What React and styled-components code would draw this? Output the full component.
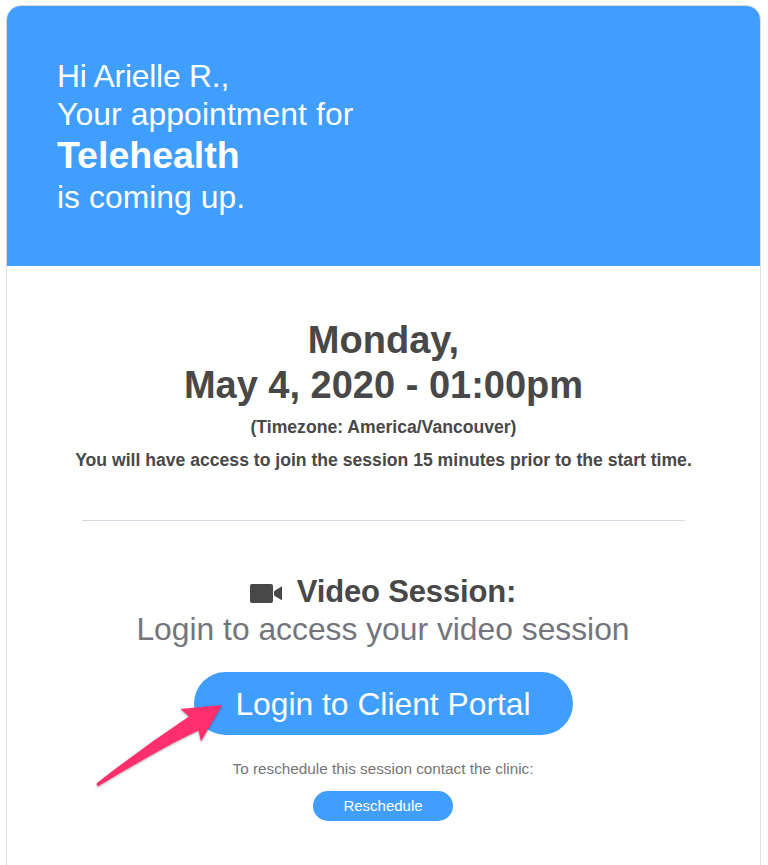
import React from 'react';
import styled, { createGlobalStyle } from 'styled-components';

const Global = createGlobalStyle`
  * { box-sizing: border-box; }
  html, body { margin: 0; background: #fff; }
  body { font-family: "Liberation Sans", Helvetica, Arial, sans-serif; overflow: hidden; }
`;
const Card = styled.main`
  width: 755px; height: 860px; margin: 5px 0 0 6px;
  border: 1px solid #dfdfdf; border-bottom: 0; border-radius: 15px 15px 0 0;
  overflow: hidden; text-align: center; color: #484848;
`;
const Hero = styled.header`
  height: 259.5px; padding: 51.5px 50px 0; background: #409eff; color: #fff; text-align: left;
`;
const Line = styled.div`
  display: flex;
  justify-content: ${p => (p.$left ? 'flex-start' : 'center')};
  align-items: center;
  height: ${p => p.$h}px;
  font-size: ${p => p.$size}px;
  font-weight: ${p => (p.$bold ? 700 : 400)};
  letter-spacing: ${p => p.$track || 0}px;
  color: ${p => p.$color || 'inherit'};
  white-space: pre;
`;
const DateBlock = styled.section`
  padding-top: 51.5px; height: 254.5px;
`;
const Divider = styled.hr`
  width: 603px; height: 1px; margin: 0 auto; border: 0; background: #d6dae4;
`;
const Session = styled.section`
  padding: 51px 1px 0 0;
`;
const CameraIcon = styled.svg`
  width: 32px; height: 20px; margin: 4px 15px 0 0; fill: #484848;
`;
const Button = styled.button`
  display: flex; align-items: center; justify-content: center; position: relative;
  width: ${p => p.$w}px; height: ${p => p.$h}px; margin: ${p => p.$top}px auto 0;
  padding: ${p => p.$pad || 0}px 0 ${p => p.$padBottom || 0}px;
  border: 0; border-radius: 40px; background: #409eff; color: #fff;
  font: ${p => p.$size}px "Liberation Sans", Helvetica, Arial, sans-serif;
`;
const Arrow = styled.svg`
  position: absolute; left: -101.5px; top: 25px; width: 140px; height: 95px;
  filter: drop-shadow(0 1px 1px rgba(0,0,0,.35)); pointer-events: none;
`;

export default function App() {
  return <><Global /><Card>
    <Hero>
      <Line $left $h={38} $size={31.8} $track={-0.2}>Hi Arielle R.,</Line>
      <Line $left $h={38} $size={31.8} $track={0.12}>Your appointment for</Line>
      <Line $left $h={44} $size={37.5} $bold>Telehealth</Line>
      <Line $left $h={39} $size={31.8} $track={0.06}>is coming up.</Line>
    </Hero>
    <DateBlock>
      <Line $h={46} $size={38} $bold>Monday,</Line>
      <Line $h={45} $size={38} $bold>May 4, 2020 - 01:00pm</Line>
      <Line $h={38} $size={17.6} $bold>(Timezone: America/Vancouver)</Line>
      <Line $h={29} $size={17.6} $bold>You will have access to join the session 15 minutes prior to the start time.</Line>
    </DateBlock>
    <Divider />
    <Session>
      <Line $h={39} $size={31} $track={-0.16} $bold>
        <CameraIcon viewBox="0 0 32 20"><path d="M2 0h19q2 0 2 2v15q0 2-2 2H2q-2 0-2-2V2q0-2 2-2zM24 8q0-1 1-1.6L32 2.3v14l-7-4.1q-1-.6-1-1.6z" /></CameraIcon>
        Video Session:
      </Line>
      <Line $h={37} $size={31.8} $color="#73757c">Login to access your video session</Line>
      <Button $w={379} $h={63} $top={24} $size={31.8} $pad={1}>
        Login to Client Portal
        <Arrow viewBox="0 0 140 95"><path d="M5 86Q51 50 97 19.5L88.5 12L130 8L109 44.5L106.5 33.5Q82 45 56 60Q31 74 6.5 89Q4 89 5 86z" fill="#ff2f6d" /></Arrow>
      </Button>
      <Line $h={67} $size={15.3} $color="#73757c">To reschedule this session contact the clinic:</Line>
      <Button $w={140} $h={30} $top={-11} $size={15} $padBottom={2}>Reschedule</Button>
    </Session>
  </Card></>;
}
